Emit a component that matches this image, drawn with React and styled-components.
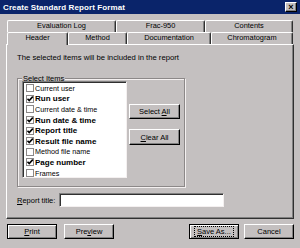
import React from "react";
import styled, { createGlobalStyle } from "styled-components";

const Global = createGlobalStyle`
  html, body { margin: 0; padding: 0; background: #c4c0c0; }
  body { font-family: "Liberation Sans", Arial, sans-serif; }
`;

const Win = styled.div`
  width: 300px;
  height: 248px;
  box-sizing: border-box;
  background: #c4c0c0;
  display: flex;
  flex-direction: column;
  overflow: hidden;
`;

const TitleBar = styled.div`
  height: 14px;
  background: #0a246a;
  display: flex;
  align-items: center;
  padding: 0 3px;
  color: #fff;
  font-weight: bold;
  font-size: 8px;
  letter-spacing: 0.1px;
`;

const TitleText = styled.div`
  flex: 1;
`;

const CloseBtn = styled.div`
  width: 10px;
  height: 8px;
  background: #c4c0c0;
  border-top: 1px solid #fff;
  border-left: 1px solid #fff;
  border-right: 1px solid #000;
  border-bottom: 1px solid #000;
  box-shadow: inset -1px -1px 0 #808080;
  color: #000;
  font-size: 9px;
  line-height: 8px;
  text-align: center;
`;

const Body = styled.div`
  padding: 6px 6px 0 6px;
  display: flex;
  flex-direction: column;
`;

const TabRow = styled.div`
  display: flex;
  padding-left: 1px;
  height: 12px;
  position: relative;
  z-index: ${(p) => (p.$front ? 2 : 1)};
`;

const Tab = styled.div`
  width: ${(p) => p.$w}px;
  height: ${(p) => (p.$active ? 13 : 12)}px;
  box-sizing: border-box;
  border-top: 1px solid #fff;
  border-left: 1px solid #fff;
  border-right: 1px solid #303030;
  box-shadow: inset -1px 0 0 #808080;
  border-radius: 2px 2px 0 0;
  background: #c4c0c0;
  font-size: 7.4px;
  line-height: 10px;
  text-align: center;
  color: #000;
`;

const Panel = styled.div`
  width: 288px;
  height: 175px;
  box-sizing: border-box;
  border-top: 1px solid #fff;
  border-left: 1px solid #fff;
  border-right: 1px solid #303030;
  border-bottom: 1px solid #303030;
  box-shadow: inset -1px -1px 0 #808080;
  padding: 9px 0 0 10px;
  display: flex;
  flex-direction: column;
`;

const Desc = styled.div`
  font-size: 7.7px;
  line-height: 8px;
  color: #000;
`;

const Group = styled.div`
  margin-top: 16px;
  width: 168px;
  height: 109px;
  box-sizing: border-box;
  border: 1px solid #8c8888;
  box-shadow: inset 1px 1px 0 #f4f0f0, 1px 1px 0 #f4f0f0;
  padding: 0 0 0 4px;
  display: flex;
  flex-direction: column;
`;

const Legend = styled.div`
  margin: -5px 0 0 0;
  padding: 0 1px;
  width: fit-content;
  background: #c4c0c0;
  font-size: 7.5px;
  line-height: 9px;
`;

const GroupInner = styled.div`
  display: flex;
  margin-top: -2px;
`;

const ListBox = styled.div`
  width: 105px;
  height: 97px;
  box-sizing: border-box;
  background: #fff;
  border-top: 1px solid #808080;
  border-left: 1px solid #808080;
  border-right: 1px solid #f4f0f0;
  border-bottom: 1px solid #f4f0f0;
  box-shadow: inset 1px 1px 0 #303030;
  padding: 1px 0 0 3px;
`;

const Row = styled.div`
  height: 10.6px;
  display: flex;
  align-items: center;
  gap: 1px;
  font-size: ${(p) => (p.$on ? 8 : 7.2)}px;
  font-weight: ${(p) => (p.$on ? "bold" : "normal")};
  color: #000;
  white-space: nowrap;
`;

const SideButtons = styled.div`
  display: flex;
  flex-direction: column;
  gap: 10px;
  margin: 23px 0 0 2px;
`;

const Button = styled.div`
  width: ${(p) => p.$w || 50}px;
  height: ${(p) => p.$h || 15}px;
  margin-left: ${(p) => p.$ml || 0}px;
  box-sizing: border-box;
  background: #c4c0c0;
  border-top: 1px solid ${(p) => (p.$def ? "#000" : "#fff")};
  border-left: 1px solid ${(p) => (p.$def ? "#000" : "#fff")};
  border-right: 1px solid #000;
  border-bottom: 1px solid #000;
  box-shadow: ${(p) =>
    p.$def
      ? "inset 1px 1px 0 #fff, inset -1px -1px 0 #808080"
      : "inset -1px -1px 0 #808080"};
  display: flex;
  align-items: center;
  justify-content: center;
  font-size: 7.5px;
  color: #000;
`;

const Caption = styled.span`
  white-space: pre;
  line-height: 9px;
  padding: 0 2px;
  outline: ${(p) => (p.$focus ? "1px dotted #000" : "none")};
`;

const U = styled.span`
  text-decoration: underline;
`;

const ReportRow = styled.div`
  display: flex;
  align-items: center;
  margin-top: 6px;
  font-size: 7.5px;
`;

const Label = styled.div`
  width: 42px;
`;

const Input = styled.div`
  width: 165px;
  height: 14px;
  box-sizing: border-box;
  background: #fff;
  border-top: 1px solid #808080;
  border-left: 1px solid #808080;
  border-right: 1px solid #f4f0f0;
  border-bottom: 1px solid #f4f0f0;
  box-shadow: inset 1px 1px 0 #303030;
`;

const BottomBar = styled.div`
  display: flex;
  margin-top: 5px;
  padding-left: 1px;
`;

const Spacer = styled.div`
  flex: 1;
`;

function Check({ on }) {
  return (
    <svg width="8" height="8" viewBox="0 0 8 8" style={{ flex: "none" }}>
      <rect x="0.5" y="0.5" width="7" height="7" fill="#fff" stroke="#8c8888" />
      {on && (
        <path d="M1.5 3.8 L3.2 5.6 L6.8 1.6" fill="none" stroke="#000" strokeWidth="1.6" />
      )}
    </svg>
  );
}

const items = [
  ["Current user", false],
  ["Run user", true],
  ["Current date & time", false],
  ["Run date & time", true],
  ["Report title", true],
  ["Result file name", true],
  ["Method file name", false],
  ["Page number", true],
  ["Frames", false],
];

export default function App() {
  return (
    <Win>
      <Global />
      <TitleBar>
        <TitleText>Create Standard Report Format</TitleText>
        <CloseBtn>×</CloseBtn>
      </TitleBar>
      <Body>
        <TabRow>
          <Tab $w={109}>Evaluation Log</Tab>
          <Tab $w={89}>Frac-950</Tab>
          <Tab $w={88}>Contents</Tab>
        </TabRow>
        <TabRow $front>
          <Tab $w={61} $active>Header</Tab>
          <Tab $w={59}>Method</Tab>
          <Tab $w={84}>Documentation</Tab>
          <Tab $w={82}>Chromatogram</Tab>
        </TabRow>
        <Panel>
          <Desc>The selected items will be included in the report</Desc>
          <Group>
            <Legend>Select Items</Legend>
            <GroupInner>
              <ListBox>
                {items.map(([t, on]) => (
                  <Row key={t} $on={on}>
                    <Check on={on} />
                    {t}
                  </Row>
                ))}
              </ListBox>
              <SideButtons>
                <Button $w={51}>
                  <Caption>Select <U>A</U>ll</Caption>
                </Button>
                <Button $w={51} $h={16}>
                  <Caption><U>C</U>lear All</Caption>
                </Button>
              </SideButtons>
            </GroupInner>
          </Group>
          <ReportRow>
            <Label><U>R</U>eport title:</Label>
            <Input />
          </ReportRow>
        </Panel>
        <BottomBar>
          <Button $def>
            <Caption><U>P</U>rint</Caption>
          </Button>
          <Button $ml={7}>
            <Caption>Pre<U>v</U>iew</Caption>
          </Button>
          <Spacer />
          <Button $def>
            <Caption $focus><U>S</U>ave As...</Caption>
          </Button>
          <Button $ml={5}>
            <Caption>Cancel</Caption>
          </Button>
        </BottomBar>
      </Body>
    </Win>
  );
}
